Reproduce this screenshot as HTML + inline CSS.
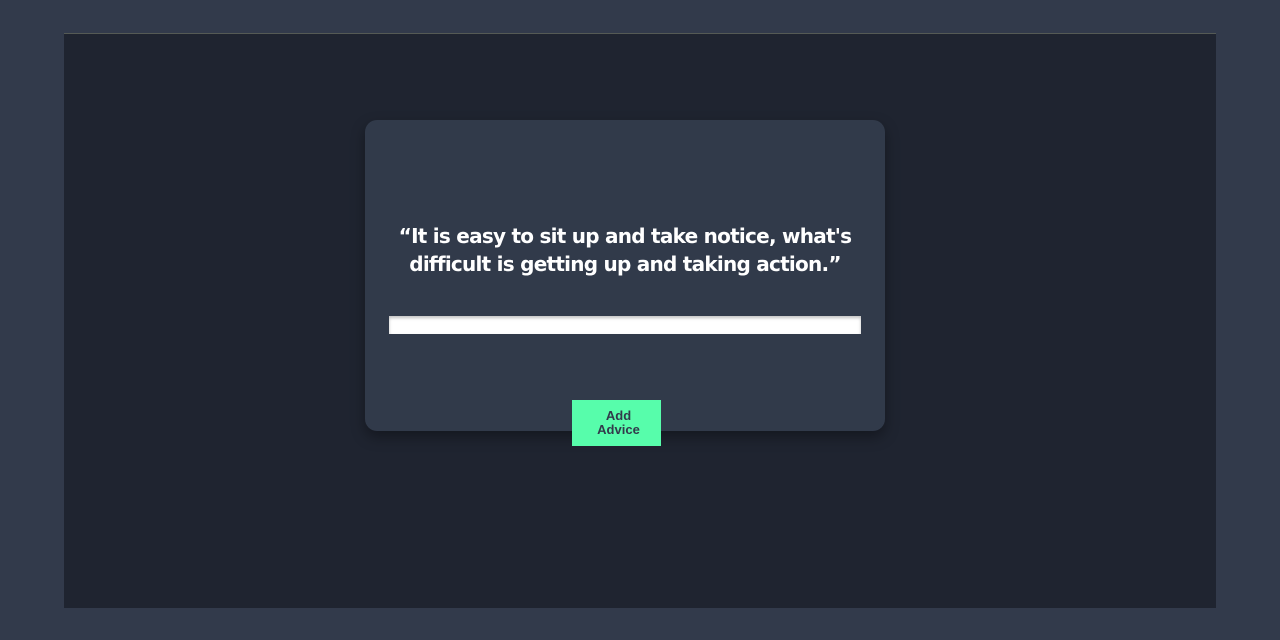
<!DOCTYPE html>
<html><head><style>
html,body{margin:0;padding:0;width:1280px;height:640px;background:#323a4b;overflow:hidden}
.main{position:absolute;left:64px;top:33px;width:1152px;height:574px;background:#1f2430;border-top:1px solid #555a55}
.card{position:absolute;left:365px;top:120px;width:520px;height:311px;background:#313a4a;border-radius:12px;box-shadow:0 6px 14px rgba(0,0,0,.35)}
.q{position:absolute;left:0;right:0;top:102px;text-align:center;color:#fff;font:bold 20px/28px "DejaVu Sans","Liberation Sans",sans-serif;letter-spacing:-0.75px}
.bar{position:absolute;left:24px;top:196px;width:472px;height:18px;background:#fff;box-shadow:inset 0 2px 3px rgba(0,0,0,.25)}
.btn{position:absolute;left:572px;top:400px;width:89px;height:46px;background:#57fdab;color:#323a4b;font:bold 13px/14px "Liberation Sans",sans-serif;text-align:center;box-sizing:border-box;padding-top:9px;padding-left:4px}
</style></head><body>
<div class="main"></div>
<div class="card">
<div class="q">“It is easy to sit up and take notice, what's<br>difficult is getting up and taking action.”</div>
<div class="bar"></div>
</div>
<div class="btn">Add<br>Advice</div>
</body></html>
